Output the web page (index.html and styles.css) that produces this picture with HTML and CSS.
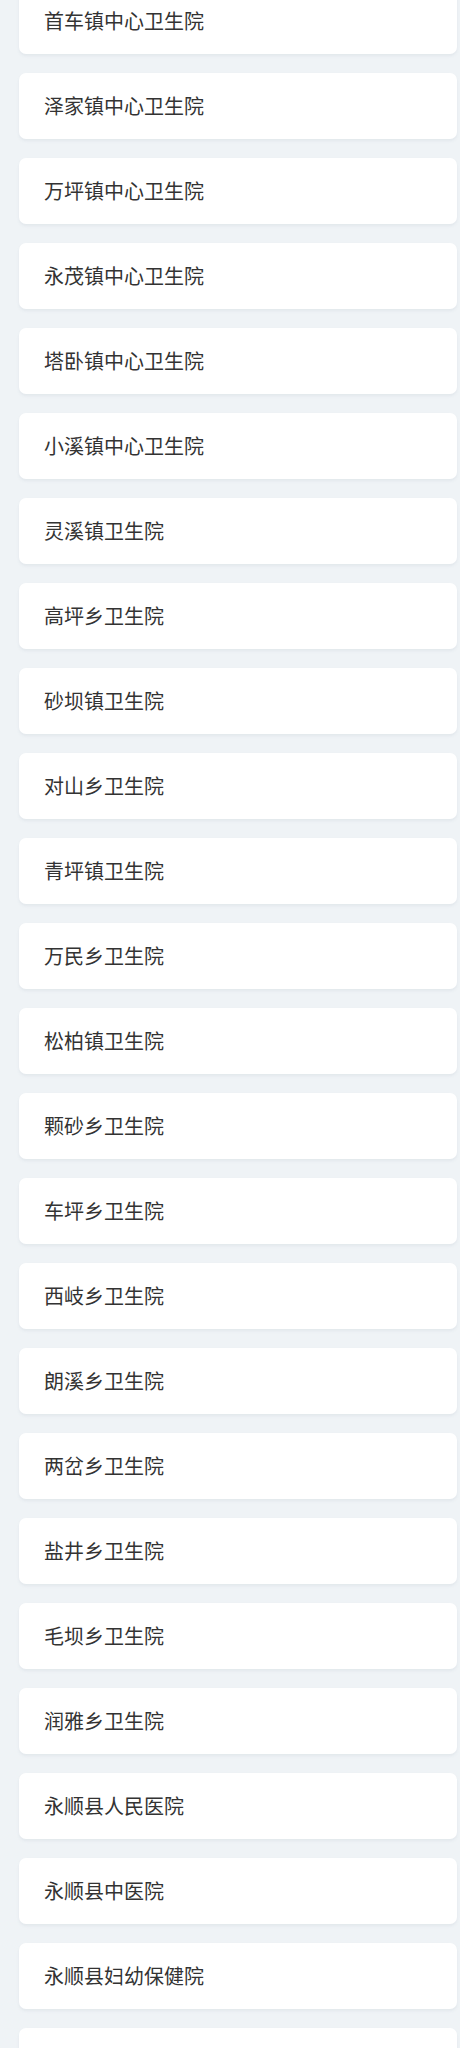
FILE: index.html
```html
<!DOCTYPE html>
<html lang="zh-CN">
<head>
<meta charset="utf-8">
<title>医院列表</title>
<link rel="stylesheet" href="styles.css">
</head>
<body>
<ul class="list">
  <li class="card">首车镇中心卫生院</li>
  <li class="card">泽家镇中心卫生院</li>
  <li class="card">万坪镇中心卫生院</li>
  <li class="card">永茂镇中心卫生院</li>
  <li class="card">塔卧镇中心卫生院</li>
  <li class="card">小溪镇中心卫生院</li>
  <li class="card">灵溪镇卫生院</li>
  <li class="card">高坪乡卫生院</li>
  <li class="card">砂坝镇卫生院</li>
  <li class="card">对山乡卫生院</li>
  <li class="card">青坪镇卫生院</li>
  <li class="card">万民乡卫生院</li>
  <li class="card">松柏镇卫生院</li>
  <li class="card">颗砂乡卫生院</li>
  <li class="card">车坪乡卫生院</li>
  <li class="card">西岐乡卫生院</li>
  <li class="card">朗溪乡卫生院</li>
  <li class="card">两岔乡卫生院</li>
  <li class="card">盐井乡卫生院</li>
  <li class="card">毛坝乡卫生院</li>
  <li class="card">润雅乡卫生院</li>
  <li class="card">永顺县人民医院</li>
  <li class="card">永顺县中医院</li>
  <li class="card">永顺县妇幼保健院</li>
  <li class="card"></li>
</ul>
</body>
</html>
```

FILE: styles.css
```css
html, body {
  margin: 0;
  padding: 0;
  background: #eff3f6;
}
body {
  font-family: "Noto Sans CJK SC", "Noto Sans", sans-serif;
  overflow: hidden;
}
.list {
  list-style: none;
  margin: -12px 0 0 0;
  padding: 0 3px 0 19px;
  display: flex;
  flex-direction: column;
  gap: 19px;
}
.card {
  height: 66px;
  box-sizing: border-box;
  background: #ffffff;
  border-radius: 7px;
  box-shadow: 0 2px 3px rgba(120, 140, 160, 0.10);
  padding: 0 25px;
  display: flex;
  align-items: center;
  font-size: 20px;
  color: #333333;
  line-height: 1;
}
```
